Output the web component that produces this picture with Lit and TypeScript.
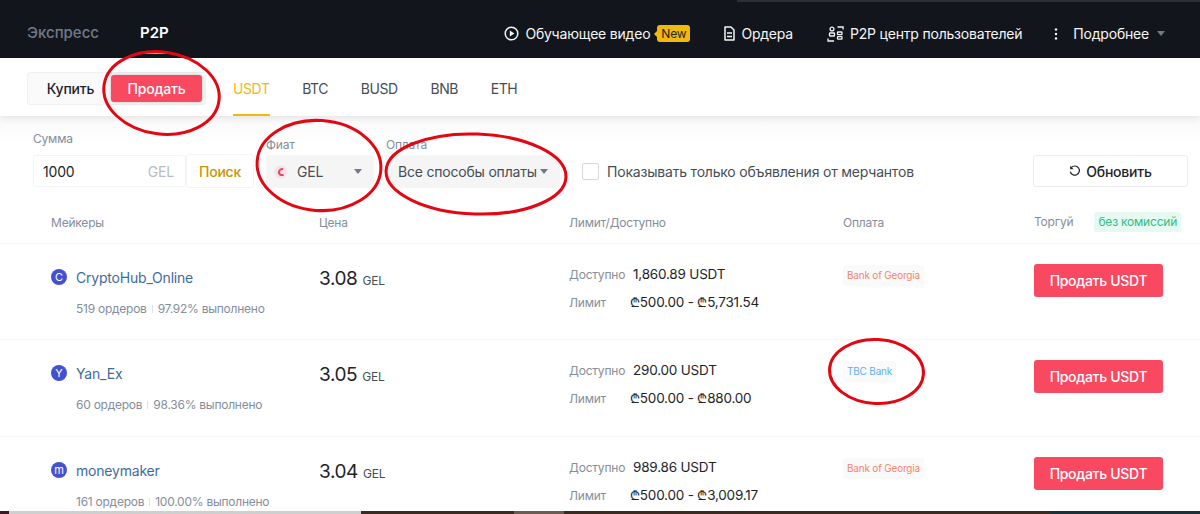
import { LitElement, css, html, svg } from "lit";
import { customElement } from "lit/decorators.js";

type Offer = {
  initial: string;
  name: string;
  orders: string;
  rate: string;
  price: string;
  available: string;
  limit: string[];
  bank: string;
  bankKind: "bog" | "tbc";
};

const offers: Offer[] = [
  {
    initial: "C",
    name: "CryptoHub_Online",
    orders: "519 ордеров",
    rate: "97.92% выполнено",
    price: "3.08",
    available: "1,860.89 USDT",
    limit: ["500.00", "5,731.54"],
    bank: "Bank of Georgia",
    bankKind: "bog",
  },
  {
    initial: "Y",
    name: "Yan_Ex",
    orders: "60 ордеров",
    rate: "98.36% выполнено",
    price: "3.05",
    available: "290.00 USDT",
    limit: ["500.00", "880.00"],
    bank: "TBC Bank",
    bankKind: "tbc",
  },
  {
    initial: "m",
    name: "moneymaker",
    orders: "161 ордеров",
    rate: "100.00% выполнено",
    price: "3.04",
    available: "989.86 USDT",
    limit: ["500.00", "3,009.17"],
    bank: "Bank of Georgia",
    bankKind: "bog",
  },
];

const playIcon = svg`<svg width="15" height="15" viewBox="0 0 15 15" fill="none">
  <circle cx="7.5" cy="7.5" r="6.3" stroke="#f5f5f5" stroke-width="1.5"></circle>
  <path d="M5.8 4.5v6l4.6-3z" fill="#f5f5f5"></path>
</svg>`;

const docIcon = svg`<svg width="11" height="15" viewBox="0 0 11 15" fill="none">
  <path d="M1 1h6l3 3v10H1z" stroke="#f5f5f5" stroke-width="1.5" stroke-linejoin="round"></path>
  <path d="M3 7h5M3 10.5h5" stroke="#f5f5f5" stroke-width="1.5"></path>
</svg>`;

const peopleIcon = svg`<svg width="17" height="16" viewBox="0 0 17 16" fill="none" stroke="#f5f5f5" stroke-width="1.3">
  <circle cx="5" cy="3" r="1.9"></circle>
  <rect x="2.5" y="7" width="5" height="3" rx="0.6"></rect>
  <rect x="10.5" y="6" width="4.5" height="2.6" rx="0.6"></rect>
  <rect x="10.5" y="10.6" width="4.5" height="2.6" rx="0.6"></rect>
  <path d="M10.5 1h5.6v2.4M1 12.6V15h6"></path>
</svg>`;

const dotsIcon = svg`<svg width="4" height="12" viewBox="0 0 4 12" fill="#f5f5f5">
  <circle cx="2" cy="1.5" r="1.2"></circle>
  <circle cx="2" cy="6" r="1.2"></circle>
  <circle cx="2" cy="10.5" r="1.2"></circle>
</svg>`;

const flagIcon = svg`<svg width="14" height="14" viewBox="0 0 14 14" fill="none">
  <circle cx="7" cy="7" r="6.5" fill="#f1e3e8"></circle>
  <path d="M9.2 4.2A3.2 3.2 0 0 0 6.6 10h3" stroke="#e8475f" stroke-width="2"></path>
</svg>`;

const refreshIcon = svg`<svg width="12" height="12" viewBox="0 0 12 12" fill="none">
  <path d="M2.3 2.6A4.6 4.6 0 1 1 1.3 6.6" stroke="#1e2329" stroke-width="1.2"></path>
  <path d="M1.2 0.8v3.4h3.4z" fill="#1e2329"></path>
</svg>`;

@customElement("app-root")
export class AppRoot extends LitElement {
  static styles = css`
    :host {
      display: block;
      height: 514px;
      overflow: hidden;
      position: relative;
      background: #fff;
      font-family: Inter, "Noto Sans", sans-serif;
      color: #1e2329;
      letter-spacing: -0.2px;
    }

    .page {
      height: 511px;
      overflow: hidden;
    }

    .top-edge {
      display: flex;
      height: 2px;
      background: #12161c;
    }

    .top-edge span {
      margin-left: 737px;
      flex: 1;
      background: #2c2f37;
    }

    .topbar {
      display: flex;
      align-items: center;
      height: 56px;
      padding: 5px 35px 0 27px;
      box-sizing: border-box;
      background: #12161c;
      color: #f5f5f5;
      font-size: 14px;
    }

    .tab-dark {
      position: relative;
      font-size: 15px;
      font-weight: 500;
      color: #707a8a;
      margin-right: 41px;
      letter-spacing: 0;
    }

    .tab-dark.active {
      color: #fff;
      font-weight: 600;
    }

    .tab-dark.active::after {
      content: "";
      position: absolute;
      left: 0;
      right: 0;
      top: 29px;
      height: 2px;
      background: #f0b90b;
    }

    .top-links {
      display: flex;
      align-items: center;
      margin-left: auto;
      padding-top: 2px;
    }

    .top-link {
      display: flex;
      align-items: center;
      gap: 6px;
      margin-left: 34px;
    }

    .new {
      position: relative;
      background: #f0b90b;
      color: #1e2329;
      font-size: 12px;
      line-height: 17px;
      padding: 0 4px;
      border-radius: 3px;
      margin-left: 1px;
    }

    .new::before {
      content: "";
      position: absolute;
      left: -3px;
      top: 6px;
      border: 3px solid transparent;
      border-left: none;
      border-right-color: #f0b90b;
    }

    .top-link.dots {
      gap: 15px;
      margin-left: 32px;
    }

    .top-link.dots .caret {
      margin-left: -7px;
    }

    .caret {
      display: block;
      width: 0;
      height: 0;
      border: 4.5px solid transparent;
      border-top: 5px solid #707a8a;
      border-bottom: none;
    }

    .tabs {
      display: flex;
      align-items: center;
      height: 58px;
      padding-left: 27px;
      box-shadow: 0 3px 6px rgba(0, 0, 0, 0.08);
      position: relative;
      background: #fff;
    }

    .switch {
      display: flex;
      align-items: center;
      box-sizing: border-box;
      width: 179px;
      height: 33px;
      margin: 3px 27px 0 0;
      border: 1px solid #eef0f2;
      border-radius: 3px;
      background: #fafafa;
      padding: 2px;
      font-size: 14px;
      font-weight: 500;
    }

    .switch span {
      flex: 1;
      text-align: center;
    }

    .switch .sell {
      flex: none;
      width: 91px;
      line-height: 27px;
      margin-right: 1px;
      background: #f84960;
      color: #fff;
      border-radius: 3px;
      box-shadow: 0 0 4px rgba(0, 0, 0, 0.22);
    }

    .coin {
      font-size: 14px;
      letter-spacing: -0.4px;
      color: #474d57;
      margin-right: 32.6px;
      padding-top: 3px;
      line-height: 55px;
    }

    .coin.active {
      color: #f0b90b;
      box-shadow: inset 0 -2px #f0b90b;
    }

    .filters {
      display: flex;
      align-items: flex-end;
      box-sizing: border-box;
      height: 72px;
      padding: 0 12px 0 33px;
      background: linear-gradient(#fafafa, #fff 30px);
      font-size: 14px;
    }

    .field-label {
      font-size: 12px;
      line-height: 15px;
      color: #848e9c;
      margin-bottom: 3px;
    }

    .field-label.high {
      margin-bottom: 9px;
    }

    .amount {
      display: flex;
      align-items: center;
      justify-content: space-between;
      box-sizing: border-box;
      width: 153px;
      height: 32px;
      margin-bottom: 1px;
      padding: 0 11px 0 9px;
      border: 1px solid #f3f4f6;
      border-radius: 3px;
      background: #fff;
    }

    .amount span {
      color: #b7bdc6;
    }

    .search {
      display: flex;
      align-items: center;
      justify-content: center;
      box-sizing: border-box;
      width: 68px;
      height: 34px;
      margin-right: 12px;
      border: 1px solid #f3f4f6;
      border-radius: 3px;
      color: #c99400;
      font-weight: 500;
    }

    .select {
      display: flex;
      align-items: center;
      box-sizing: border-box;
      height: 33px;
      background: #f5f5f5;
      border-radius: 3px;
      color: #474d57;
      padding: 0 12px;
    }

    .select.fiat {
      width: 108px;
      padding-left: 8px;
    }

    .select.fiat svg {
      margin-right: 9px;
    }

    .select.fiat .caret {
      margin-left: auto;
    }

    .select.pay {
      width: 174px;
      gap: 3px;
    }

    .pay-field {
      margin-left: 12px;
    }

    .check {
      display: flex;
      align-items: center;
      gap: 8px;
      height: 33px;
      margin-left: 22px;
      color: #474d57;
    }

    .check i {
      box-sizing: border-box;
      width: 17px;
      height: 17px;
      border: 1px solid #d5d8dc;
      border-radius: 2px;
    }

    .refresh {
      display: flex;
      align-items: center;
      justify-content: center;
      gap: 5px;
      box-sizing: border-box;
      width: 155px;
      height: 32px;
      margin: 0 0 1px auto;
      border: 1px solid #eaecef;
      border-radius: 3px;
      font-weight: 500;
    }

    .row {
      display: grid;
      grid-template-columns: 268px 250px 274px 191px 1fr;
      padding-left: 51px;
    }

    .head {
      box-sizing: border-box;
      height: 41px;
      margin-top: 15px;
      padding-bottom: 2px;
      align-items: center;
      border-bottom: 1px solid #f5f5f5;
      font-size: 12px;
      color: #848e9c;
    }

    .free {
      display: inline-block;
      line-height: 20px;
      padding: 0 4px;
      margin-left: 21px;
      border-radius: 3px;
      color: #2ebd85;
      background: #e6faf2;
    }

    .offer {
      box-sizing: border-box;
      height: 97px;
      padding-top: 23px;
      align-items: start;
      border-bottom: 1px solid #f5f5f5;
    }

    .head + .offer {
      height: 96px;
    }

    .trader {
      display: flex;
      align-items: center;
      gap: 9px;
      height: 20px;
      color: #3f6b9b;
      font-size: 14px;
    }

    .avatar {
      display: flex;
      align-items: center;
      justify-content: center;
      width: 16px;
      height: 16px;
      border-radius: 50%;
      background: #4450cf;
      color: #fff;
      font-size: 11px;
    }

    .stats {
      margin: 14px 0 0 25px;
      font-size: 12px;
      letter-spacing: -0.25px;
      color: #848e9c;
    }

    .stats b {
      display: inline-block;
      width: 1px;
      height: 8px;
      background: #dfe1e5;
      margin: 0 5px;
    }

    .price {
      font-size: 19px;
      line-height: 24px;
      letter-spacing: -0.4px;
      color: #1e2329;
    }

    .price small {
      font-size: 12px;
      letter-spacing: -0.2px;
      color: #474d57;
    }

    .limits {
      margin-top: -3px;
    }

    .line {
      display: flex;
      align-items: center;
      height: 20px;
      margin-bottom: 8px;
      font-size: 13.5px;
      color: #1e2329;
      white-space: pre;
    }

    .line label {
      width: 64px;
      font-size: 12px;
      color: #848e9c;
    }

    .line.limit label {
      width: 61px;
    }

    .lari {
      font-family: "DejaVu Sans", sans-serif;
      font-size: 13px;
    }

    .bank {
      display: block;
      width: fit-content;
      margin-top: -2px;
      padding: 4px;
      font-size: 10px;
      line-height: 13px;
      border-radius: 3px;
      background: #fafafa;
    }

    .bank.bog {
      color: #f6846a;
    }

    .bank.tbc {
      color: #5fb0ec;
    }

    .sell-btn {
      display: flex;
      align-items: center;
      justify-content: center;
      width: 129px;
      height: 33px;
      margin-top: -3px;
      border-radius: 3px;
      background: #f84960;
      color: #fff;
      font-size: 14px;
      font-weight: 500;
      letter-spacing: -0.3px;
    }

    .bottom-edge {
      display: flex;
      height: 3px;
      background: #3b2a20;
    }

    .bottom-edge .maroon {
      width: 9px;
      background: #3a1a24;
    }

    .bottom-edge .grey {
      width: 352px;
      background: #cfcfcf;
    }

    .bottom-edge .mid {
      width: 50px;
      margin-left: 153px;
      background: #6b5b50;
    }

    .bottom-edge .teal {
      width: 150px;
      margin-left: auto;
      background: #1c3036;
    }

    .marks {
      position: absolute;
      inset: 0;
      pointer-events: none;
    }

    .marks ellipse {
      fill: none;
      stroke: #e30613;
      stroke-width: 3;
    }
  `;

  render() {
    return html`
      <div class="page">
        <div class="top-edge"><span></span></div>
        <div class="topbar">
          <span class="tab-dark">Экспресс</span>
          <span class="tab-dark active">P2P</span>
          <div class="top-links">
            <span class="top-link">${playIcon}Обучающее видео<span class="new">New</span></span>
            <span class="top-link">${docIcon}Ордера</span>
            <span class="top-link">${peopleIcon}P2P центр пользователей</span>
            <span class="top-link dots">${dotsIcon}<span>Подробнее</span><span class="caret"></span></span>
          </div>
        </div>
        <div class="tabs">
          <div class="switch"><span>Купить</span><span class="sell">Продать</span></div>
          <span class="coin active">USDT</span>
          <span class="coin">BTC</span>
          <span class="coin">BUSD</span>
          <span class="coin">BNB</span>
          <span class="coin">ETH</span>
        </div>
        <div class="filters">
          <div>
            <div class="field-label high">Сумма</div>
            <div class="amount">1000 <span>GEL</span></div>
          </div>
          <div class="search">Поиск</div>
          <div>
            <div class="field-label">Фиат</div>
            <div class="select fiat">${flagIcon}GEL<span class="caret"></span></div>
          </div>
          <div class="pay-field">
            <div class="field-label">Оплата</div>
            <div class="select pay">Все способы оплаты<span class="caret"></span></div>
          </div>
          <div class="check"><i></i>Показывать только объявления от мерчантов</div>
          <div class="refresh">${refreshIcon}Обновить</div>
        </div>
        <div class="row head">
          <span>Мейкеры</span><span>Цена</span><span>Лимит/Доступно</span><span>Оплата</span>
          <span>Торгуй<span class="free">без комиссий</span></span>
        </div>
        ${offers.map(
          (o) => html`<div class="row offer">
            <div>
              <div class="trader"><span class="avatar">${o.initial}</span>${o.name}</div>
              <div class="stats">${o.orders}<b></b>${o.rate}</div>
            </div>
            <div class="price">${o.price} <small>GEL</small></div>
            <div class="limits">
              <div class="line"><label>Доступно</label>${o.available}</div>
              <div class="line limit"><label>Лимит</label><span class="lari">₾</span>${o.limit[0]} - <span class="lari">₾</span>${o.limit[1]}</div>
            </div>
            <div><span class="bank ${o.bankKind}">${o.bank}</span></div>
            <div class="sell-btn">Продать USDT</div>
          </div>`
        )}
      </div>
      <div class="bottom-edge">
        <span class="maroon"></span><span class="grey"></span><span class="mid"></span><span class="teal"></span>
      </div>
      <svg class="marks" width="1200" height="514" viewBox="0 0 1200 514">
        <ellipse cx="161.5" cy="93" rx="58" ry="41" transform="rotate(8 161.5 93)"></ellipse>
        <ellipse cx="319" cy="165.5" rx="62" ry="45" transform="rotate(4 319 165.5)"></ellipse>
        <ellipse cx="476" cy="174" rx="90" ry="40" transform="rotate(2 476 174)"></ellipse>
        <ellipse cx="876.5" cy="371.5" rx="47" ry="32" transform="rotate(3 876.5 371.5)"></ellipse>
      </svg>
    `;
  }
}
